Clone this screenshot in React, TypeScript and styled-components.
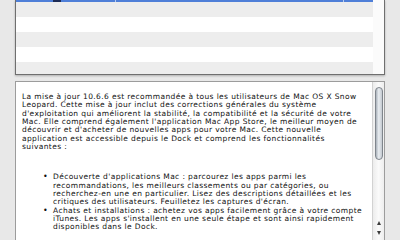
import styled, { createGlobalStyle } from "styled-components";

const GlobalStyle = createGlobalStyle`
  html, body {
    margin: 0;
    padding: 0;
    background: #e8e8e8;
  }
`;

const Page = styled.div`
  width: 400px;
  height: 240px;
  overflow: hidden;
  box-sizing: border-box;
  padding: 0 15px;
  display: flex;
  flex-direction: column;
  gap: 6px;
  background: #e8e8e8;
  font-family: "DejaVu Sans", "Liberation Sans", sans-serif;
`;

const TablePanel = styled.div`
  height: 75px;
  flex-shrink: 0;
  box-sizing: border-box;
  display: flex;
  border: 1px solid #6f6f6f;
  border-top: none;
  background: #ffffff;
  box-shadow: 0 1px 2px rgba(0, 0, 0, 0.25);
`;

const Rows = styled.div`
  flex: 1;
  display: flex;
  flex-direction: column;
  overflow: hidden;
`;

const SelectedEdge = styled.div`
  height: 2px;
  flex-shrink: 0;
  display: grid;
  grid-template-columns: 37px 8px 54px 1px 227px 1px 1fr;
  background: #4f7fd8;
`;

const EdgeMark = styled.div<{ $tone: string }>`
  background: ${(p) => p.$tone};
`;

const Row = styled.div<{ $striped: boolean }>`
  height: 15px;
  flex-shrink: 0;
  background: ${(p) => (p.$striped ? "#ededed" : "#ffffff")};
`;

const TableGutter = styled.div`
  width: 11px;
  background: #fbfbfb;
`;

const TextPanel = styled.div`
  flex: 1;
  display: flex;
  border: 1px solid #9c9c9c;
  border-bottom: none;
  background: #ffffff;
`;

const Body = styled.div`
  flex: 1;
  padding: 11px 0 0 6px;
  font-size: 7.5px;
  letter-spacing: 0.38px;
  line-height: 8.35px;
  color: #111111;
  white-space: nowrap;
  overflow: hidden;
`;

const Line = styled.span`
  display: block;
`;

const Paragraph = styled.p`
  margin: 0 0 22px;
`;

const List = styled.ul`
  margin: 0 0 0 21px;
  padding: 0;
  list-style: none;
`;

const Item = styled.li`
  display: flex;
`;

const Dot = styled.span`
  width: 10px;
  flex-shrink: 0;
  font-size: 8px;
`;

const ScrollBar = styled.div`
  width: 11px;
  flex-shrink: 0;
  display: flex;
  flex-direction: column;
  align-items: center;
  border-left: 1px solid #d2d2d2;
  background: linear-gradient(to right, #ececec, #fafafa 50%, #eeeeee);
`;

const Thumb = styled.div`
  margin-top: 5px;
  width: 8px;
  height: 73px;
  box-sizing: border-box;
  border: 1px solid #7f858c;
  border-radius: 5px;
  background: linear-gradient(to right, #a9b1ba, #e9edf1 45%, #c3c9d0);
`;

const Arrows = styled.div`
  margin-top: auto;
  margin-bottom: 5px;
  display: flex;
  flex-direction: column;
  align-items: center;
  gap: 6px;
`;

const Arrow = styled.div<{ $down?: boolean }>`
  width: 0;
  height: 0;
  border-left: 2.5px solid transparent;
  border-right: 2.5px solid transparent;
  ${(p) =>
    p.$down
      ? "border-top: 4px solid #3c3c3c;"
      : "border-bottom: 4px solid #3c3c3c;"}
`;

const paragraph = [
  "La mise à jour 10.6.6 est recommandée à tous les utilisateurs de Mac OS X Snow",
  "Leopard. Cette mise à jour inclut des corrections générales du système",
  "d'exploitation qui améliorent la stabilité, la compatibilité et la sécurité de votre",
  "Mac. Elle comprend également l'application Mac App Store, le meilleur moyen de",
  "découvrir et d'acheter de nouvelles apps pour votre Mac. Cette nouvelle",
  "application est accessible depuis le Dock et comprend les fonctionnalités",
  "suivantes :",
];

const bullets = [
  [
    "Découverte d'applications Mac : parcourez les apps parmi les",
    "recommandations, les meilleurs classements ou par catégories, ou",
    "recherchez-en une en particulier. Lisez des descriptions détaillées et les",
    "critiques des utilisateurs. Feuilletez les captures d'écran.",
  ],
  [
    "Achats et installations : achetez vos apps facilement grâce à votre compte",
    "iTunes. Les apps s'installent en une seule étape et sont ainsi rapidement",
    "disponibles dans le Dock.",
  ],
];

export default function App() {
  return (
    <>
      <GlobalStyle />
      <Page>
        <TablePanel>
          <Rows>
            <SelectedEdge>
              <div />
              <EdgeMark $tone="#1d2c55" />
              <div />
              <EdgeMark $tone="#b7ccf0" />
              <div />
              <EdgeMark $tone="#b7ccf0" />
              <div />
            </SelectedEdge>
            {[true, false, true, false, true].map((s, i) => (
              <Row key={i} $striped={s} />
            ))}
          </Rows>
          <TableGutter />
        </TablePanel>
        <TextPanel>
          <Body>
            <Paragraph>
              {paragraph.map((l) => (
                <Line key={l}>{l}</Line>
              ))}
            </Paragraph>
            <List>
              {bullets.map((b, i) => (
                <Item key={i}>
                  <Dot>•</Dot>
                  <div>
                    {b.map((l) => (
                      <Line key={l}>{l}</Line>
                    ))}
                  </div>
                </Item>
              ))}
            </List>
          </Body>
          <ScrollBar>
            <Thumb />
            <Arrows>
              <Arrow />
              <Arrow $down />
            </Arrows>
          </ScrollBar>
        </TextPanel>
      </Page>
    </>
  );
}
